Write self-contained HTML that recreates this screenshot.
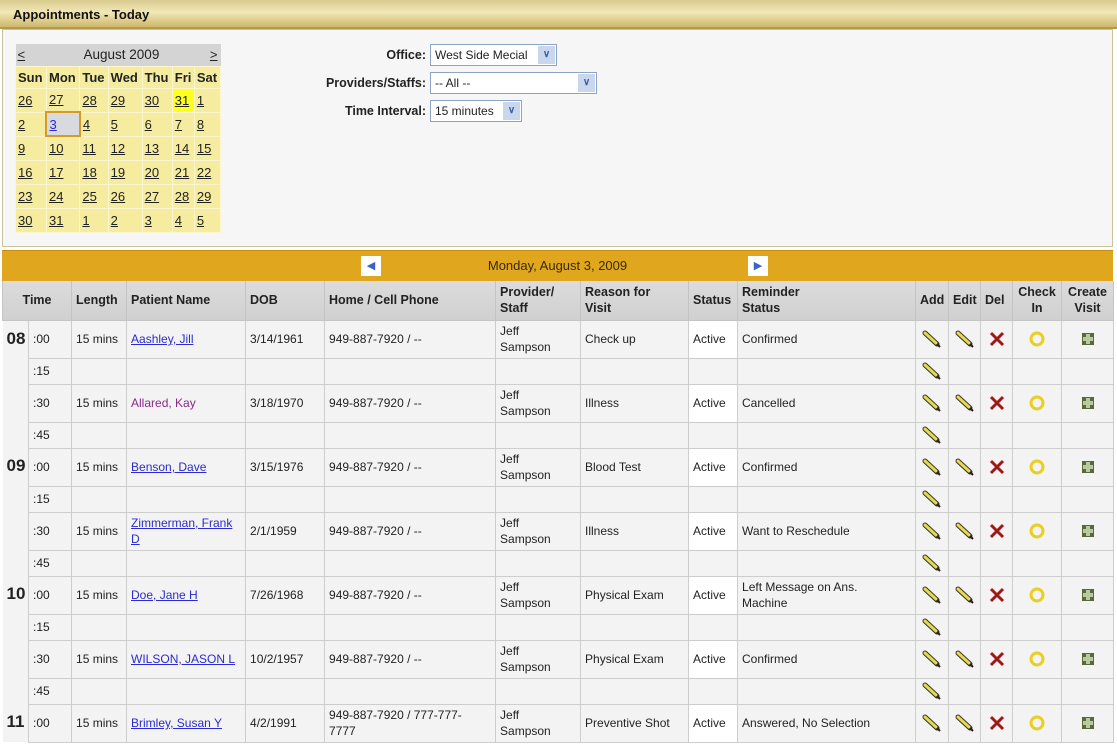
<!DOCTYPE html>
<html><head><meta charset="utf-8"><style>
*{box-sizing:border-box}
body{margin:0;width:1117px;height:749px;overflow:hidden;background:#fff;font-family:"Liberation Sans",Arial,sans-serif;font-size:12px;color:#222;position:relative}
.title{position:absolute;left:0;top:0;width:1117px;height:29px;background:linear-gradient(#d9cb90,#f2e7b7 45%,#cdb76a);border-bottom:2px solid #b09a50;font-weight:bold;font-size:13px;padding:7px 0 0 13px;color:#111}
.panel{position:absolute;left:2px;top:29px;width:1111px;height:218px;background:#f6f6f6;border:1px solid #c9c39a}
.cal{position:absolute;left:15px;top:44px;width:206px;border-collapse:collapse;font-size:13px}
.cal td{padding:0 0 0 2px;height:24px;background:#f5ec9f;border:1px solid #fbf6cf;text-decoration:underline;color:#222}
.cal tr.dn td{font-weight:bold;text-decoration:none;height:22px}
.cal .hd td{background:#d4d4d4;text-decoration:none;height:22px;border:none}
.form{position:absolute;font-size:12.5px}
.form label{position:absolute;font-weight:bold;text-align:right;width:120px;color:#222}
.sel{position:absolute;height:22px;background:#fff;border:1px solid #8ea4c4;font-size:12px;padding:3px 0 0 4px}
.sel b{position:absolute;right:1px;top:1px;width:17px;height:18px;background:#c9d7ee;color:#3d5fa0;font-size:10px;text-align:center;line-height:18px}
.bar{position:absolute;left:2px;top:250px;width:1111px;height:31px;background:#e0a71e;border-top:1px solid #c68f12;text-align:center;font-size:13px;padding-top:7px;color:#3a2a00}
.arr{position:absolute;top:5px;width:20px;height:20px;background:#fff;color:#3a62c8;font-size:11px;line-height:20px;text-align:center}
table.g{position:absolute;left:2px;top:281px;border-collapse:collapse;table-layout:fixed;width:1111px;font-size:12px}
.g th{background:linear-gradient(#dcdcdc,#d0d0d0);font-weight:bold;text-align:left;padding:2px 4px;height:39px;border:1px solid #c4c4c4;border-top:none;font-size:12.5px;line-height:16px;color:#222}
.g td{background:#f3f3f3;border:1px solid #cdcdcd;padding:2px 4px;line-height:16px;vertical-align:middle}
.g tr.f td{height:38px}
.g tr.q td{height:26px}
.g td.h{border:none;background:#f3f3f3;font-weight:bold;font-size:17px;vertical-align:top;padding:10px 0 0 4px}
.g td.st{background:#fff}
.g td.c{text-align:center;padding:0}
.g td.c svg{display:block;margin:0 auto}
a{color:#2b2bd0}
a.v{color:#8a2a8a;text-decoration:none}
</style></head><body>
<div class="title">Appointments - Today</div>
<div class="panel"></div>
<table class="cal">
<tr class="hd"><td style="text-decoration:underline">&lt;</td><td colspan="5" style="text-align:center;font-size:13.5px">August 2009</td><td style="text-align:right;text-decoration:underline;padding-right:3px">&gt;</td></tr>
<tr class="dn"><td>Sun</td><td>Mon</td><td>Tue</td><td>Wed</td><td>Thu</td><td>Fri</td><td>Sat</td></tr>
<tr><td>26</td><td>27</td><td>28</td><td>29</td><td>30</td><td style="background:#ffff20">31</td><td>1</td></tr>
<tr><td>2</td><td style="background:#d9d9e0;border:2px solid #d49a2a;color:#2b2bd0">3</td><td>4</td><td>5</td><td>6</td><td>7</td><td>8</td></tr>
<tr><td>9</td><td>10</td><td>11</td><td>12</td><td>13</td><td>14</td><td>15</td></tr>
<tr><td>16</td><td>17</td><td>18</td><td>19</td><td>20</td><td>21</td><td>22</td></tr>
<tr><td>23</td><td>24</td><td>25</td><td>26</td><td>27</td><td>28</td><td>29</td></tr>
<tr><td>30</td><td>31</td><td>1</td><td>2</td><td>3</td><td>4</td><td>5</td></tr>
</table>
<div class="form">
<label style="left:306px;top:48px">Office:</label><div class="sel" style="left:430px;top:44px;width:127px">West Side Mecial<b>&#8744;</b></div>
<label style="left:306px;top:76px">Providers/Staffs:</label><div class="sel" style="left:430px;top:72px;width:167px">-- All --<b>&#8744;</b></div>
<label style="left:306px;top:104px">Time Interval:</label><div class="sel" style="left:430px;top:100px;width:92px">15 minutes<b>&#8744;</b></div>
</div>
<div class="bar"><div class="arr" style="left:359px">&#9664;</div>Monday, August 3, 2009<div class="arr" style="left:746px">&#9654;</div></div>
<svg width="0" height="0" style="position:absolute"><defs>
<symbol id="p" viewBox="0 0 20 20"><path d="M3 4 L15 15" stroke="#333" stroke-width="5" stroke-linecap="round"/><path d="M3 4 L14 14" stroke="#e8d84a" stroke-width="3" stroke-linecap="round"/><path d="M15 15 L18 18" stroke="#222" stroke-width="2"/></symbol>
<symbol id="x" viewBox="0 0 20 20"><path d="M4 4 L16 16 M16 4 L4 16" stroke="#a01818" stroke-width="3"/></symbol>
<symbol id="o" viewBox="0 0 20 20"><circle cx="10" cy="10" r="6" fill="none" stroke="#e8d020" stroke-width="3"/></symbol>
<symbol id="s" viewBox="0 0 20 20"><rect x="4" y="4" width="12" height="12" fill="#556b3a"/><rect x="8" y="5" width="4" height="10" fill="#b8c8a0"/><rect x="5" y="8" width="10" height="4" fill="#b8c8a0"/></symbol>
</defs></svg>
<table class="g">
<colgroup><col style="width:26px"><col style="width:43px"><col style="width:55px"><col style="width:119px"><col style="width:79px"><col style="width:171px"><col style="width:85px"><col style="width:108px"><col style="width:49px"><col style="width:178px"><col style="width:33px"><col style="width:32px"><col style="width:32px"><col style="width:49px"><col style="width:52px"></colgroup>
<tr><th colspan="2" style="text-align:center">Time</th><th>Length</th><th>Patient Name</th><th>DOB</th><th>Home / Cell Phone</th><th>Provider/<br>Staff</th><th>Reason for<br>Visit</th><th>Status</th><th>Reminder<br>Status</th><th>Add</th><th>Edit</th><th>Del</th><th style="text-align:center">Check<br>In</th><th style="text-align:center">Create<br>Visit</th></tr>
<tr class="f"><td class="h" rowspan="4">08</td><td>:00</td><td>15 mins</td><td><a href="#">Aashley, Jill</a></td><td>3/14/1961</td><td>949-887-7920 / --</td><td>Jeff<br>Sampson</td><td>Check up</td><td class="st">Active</td><td>Confirmed</td><td class="c"><svg width="20" height="20"><use href="#p"/></svg></td><td class="c"><svg width="20" height="20"><use href="#p"/></svg></td><td class="c"><svg width="20" height="20"><use href="#x"/></svg></td><td class="c"><svg width="20" height="20"><use href="#o"/></svg></td><td class="c"><svg width="20" height="20"><use href="#s"/></svg></td></tr>
<tr class="q"><td>:15</td><td></td><td></td><td></td><td></td><td></td><td></td><td></td><td></td><td class="c"><svg width="20" height="20"><use href="#p"/></svg></td><td></td><td></td><td></td><td></td></tr>
<tr class="f"><td>:30</td><td>15 mins</td><td><a class="v" href="#">Allared, Kay</a></td><td>3/18/1970</td><td>949-887-7920 / --</td><td>Jeff<br>Sampson</td><td>Illness</td><td class="st">Active</td><td>Cancelled</td><td class="c"><svg width="20" height="20"><use href="#p"/></svg></td><td class="c"><svg width="20" height="20"><use href="#p"/></svg></td><td class="c"><svg width="20" height="20"><use href="#x"/></svg></td><td class="c"><svg width="20" height="20"><use href="#o"/></svg></td><td class="c"><svg width="20" height="20"><use href="#s"/></svg></td></tr>
<tr class="q"><td>:45</td><td></td><td></td><td></td><td></td><td></td><td></td><td></td><td></td><td class="c"><svg width="20" height="20"><use href="#p"/></svg></td><td></td><td></td><td></td><td></td></tr>
<tr class="f"><td class="h" rowspan="4">09</td><td>:00</td><td>15 mins</td><td><a href="#">Benson, Dave</a></td><td>3/15/1976</td><td>949-887-7920 / --</td><td>Jeff<br>Sampson</td><td>Blood Test</td><td class="st">Active</td><td>Confirmed</td><td class="c"><svg width="20" height="20"><use href="#p"/></svg></td><td class="c"><svg width="20" height="20"><use href="#p"/></svg></td><td class="c"><svg width="20" height="20"><use href="#x"/></svg></td><td class="c"><svg width="20" height="20"><use href="#o"/></svg></td><td class="c"><svg width="20" height="20"><use href="#s"/></svg></td></tr>
<tr class="q"><td>:15</td><td></td><td></td><td></td><td></td><td></td><td></td><td></td><td></td><td class="c"><svg width="20" height="20"><use href="#p"/></svg></td><td></td><td></td><td></td><td></td></tr>
<tr class="f"><td>:30</td><td>15 mins</td><td><a href="#">Zimmerman, Frank D</a></td><td>2/1/1959</td><td>949-887-7920 / --</td><td>Jeff<br>Sampson</td><td>Illness</td><td class="st">Active</td><td>Want to Reschedule</td><td class="c"><svg width="20" height="20"><use href="#p"/></svg></td><td class="c"><svg width="20" height="20"><use href="#p"/></svg></td><td class="c"><svg width="20" height="20"><use href="#x"/></svg></td><td class="c"><svg width="20" height="20"><use href="#o"/></svg></td><td class="c"><svg width="20" height="20"><use href="#s"/></svg></td></tr>
<tr class="q"><td>:45</td><td></td><td></td><td></td><td></td><td></td><td></td><td></td><td></td><td class="c"><svg width="20" height="20"><use href="#p"/></svg></td><td></td><td></td><td></td><td></td></tr>
<tr class="f"><td class="h" rowspan="4">10</td><td>:00</td><td>15 mins</td><td><a href="#">Doe, Jane H</a></td><td>7/26/1968</td><td>949-887-7920 / --</td><td>Jeff<br>Sampson</td><td>Physical Exam</td><td class="st">Active</td><td>Left Message on Ans.<br>Machine</td><td class="c"><svg width="20" height="20"><use href="#p"/></svg></td><td class="c"><svg width="20" height="20"><use href="#p"/></svg></td><td class="c"><svg width="20" height="20"><use href="#x"/></svg></td><td class="c"><svg width="20" height="20"><use href="#o"/></svg></td><td class="c"><svg width="20" height="20"><use href="#s"/></svg></td></tr>
<tr class="q"><td>:15</td><td></td><td></td><td></td><td></td><td></td><td></td><td></td><td></td><td class="c"><svg width="20" height="20"><use href="#p"/></svg></td><td></td><td></td><td></td><td></td></tr>
<tr class="f"><td>:30</td><td>15 mins</td><td><a href="#">WILSON, JASON L</a></td><td>10/2/1957</td><td>949-887-7920 / --</td><td>Jeff<br>Sampson</td><td>Physical Exam</td><td class="st">Active</td><td>Confirmed</td><td class="c"><svg width="20" height="20"><use href="#p"/></svg></td><td class="c"><svg width="20" height="20"><use href="#p"/></svg></td><td class="c"><svg width="20" height="20"><use href="#x"/></svg></td><td class="c"><svg width="20" height="20"><use href="#o"/></svg></td><td class="c"><svg width="20" height="20"><use href="#s"/></svg></td></tr>
<tr class="q"><td>:45</td><td></td><td></td><td></td><td></td><td></td><td></td><td></td><td></td><td class="c"><svg width="20" height="20"><use href="#p"/></svg></td><td></td><td></td><td></td><td></td></tr>
<tr class="f"><td class="h" rowspan="1">11</td><td>:00</td><td>15 mins</td><td><a href="#">Brimley, Susan Y</a></td><td>4/2/1991</td><td>949-887-7920 / 777-777-<br>7777</td><td>Jeff<br>Sampson</td><td>Preventive Shot</td><td class="st">Active</td><td>Answered, No Selection</td><td class="c"><svg width="20" height="20"><use href="#p"/></svg></td><td class="c"><svg width="20" height="20"><use href="#p"/></svg></td><td class="c"><svg width="20" height="20"><use href="#x"/></svg></td><td class="c"><svg width="20" height="20"><use href="#o"/></svg></td><td class="c"><svg width="20" height="20"><use href="#s"/></svg></td></tr>
</table>
</body></html>
